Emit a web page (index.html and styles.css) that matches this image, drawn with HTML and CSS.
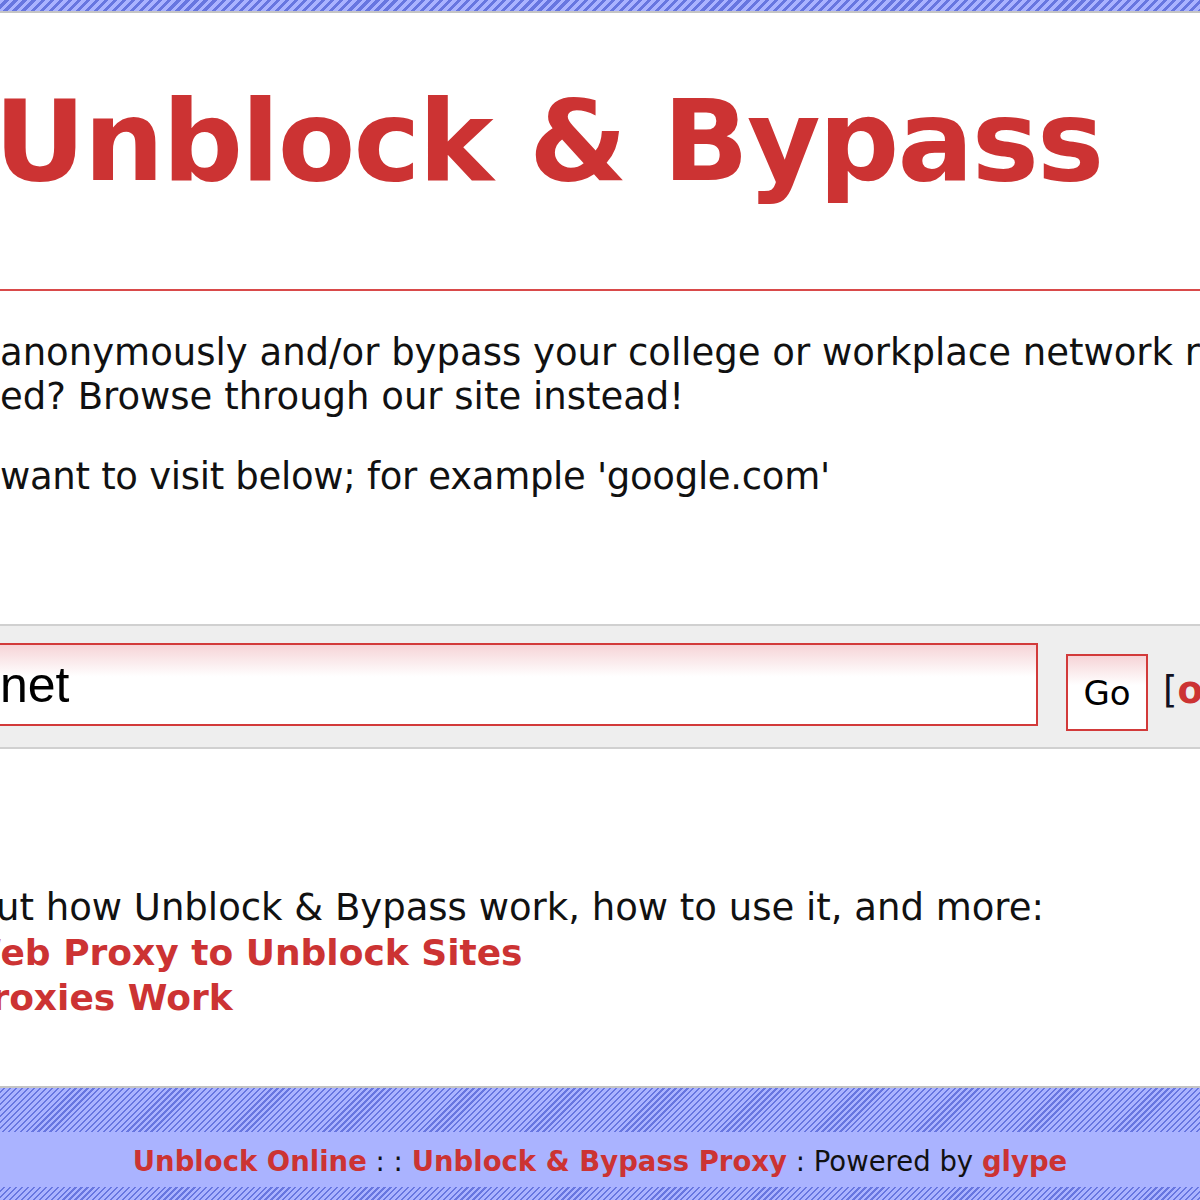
FILE: index.html
```html
<!DOCTYPE html>
<html lang="en">
  <head>
    <title>Unblock &amp; Bypass</title>
    <link rel="stylesheet" href="styles.css">
  </head>
  <body>
    <div class="topbar"></div>
    <main class="page">
      <header class="header">
        <h1 class="title">Unblock &amp; Bypass</h1>
      </header>
      <hr class="rule">
      <div class="intro">
        <p>
          <span class="line">anonymously and/or bypass your college or workplace network restrictions?</span>
          <span class="line">ed? Browse through our site instead!</span>
        </p>
        <p>
          <span class="line tight">want to visit below; for example 'google.com'</span>
        </p>
      </div>
      <form class="urlbar" onsubmit="return false">
        <input class="url" type="text" value="net">
        <button class="go" type="submit">Go</button>
        <span class="opts">[<a href="#">options</a>]</span>
      </form>
      <div class="more">
        <span class="line first">ut how Unblock &amp; Bypass work, how to use it, and more:</span>
        <a class="line link cut-w" href="#">Web Proxy to Unblock Sites</a>
        <a class="line link cut-p" href="#">Proxies Work</a>
      </div>
    </main>
    <footer class="footer">
      <div class="stripes"></div>
      <div class="credits">
        <a href="#">Unblock Online</a> : : <a href="#">Unblock &amp; Bypass Proxy</a> : Powered by <a href="#">glype</a>
      </div>
      <div class="stripes low"></div>
    </footer>
  </body>
</html>
```

FILE: styles.css
```css
html, body {
  margin: 0;
  padding: 0;
  width: 1200px;
  height: 1200px;
  overflow: hidden;
  background: #fff;
}

body {
  font-family: "DejaVu Sans", Verdana, sans-serif;
  color: #111;
}

a {
  color: #cc3333;
  font-weight: bold;
  text-decoration: none;
}

.topbar {
  height: 11px;
  background: repeating-linear-gradient(135deg, #aab3ff 0, #aab3ff 3.4px, #6776e0 3.4px, #6776e0 6.4px);
  border-bottom: 2px solid #c4c4c4;
}

.page {
  overflow: hidden;
}

.header {
  padding-top: 72px;
}

.title {
  margin: 0 0 0 -6px;
  font-size: 113px;
  line-height: 1;
  letter-spacing: -2px;
  font-weight: bold;
  color: #cc3333;
  white-space: nowrap;
}

.rule {
  margin: 91px 0 0;
  border: 0;
  height: 2px;
  background: #d94a4a;
}

.intro {
  padding-top: 4px;
  font-size: 37px;
  line-height: 44px;
}

.intro p {
  margin: 36px 0;
}

.line {
  display: block;
  white-space: nowrap;
}

.tight {
  letter-spacing: -0.3px;
}

.urlbar {
  display: flex;
  align-items: center;
  margin-top: 125px;
  height: 121px;
  background: #eeeeee;
  border-top: 2px solid #d0d0d0;
  border-bottom: 2px solid #d0d0d0;
}

.url {
  flex-shrink: 0;
  box-sizing: border-box;
  width: 1060px;
  height: 83px;
  margin: 0 0 4px -22px;
  padding: 0 0 0 20px;
  border: 2px solid #d23a3a;
  background: linear-gradient(#f6d4d7 0, #fff 40%);
  font-family: "Liberation Sans", Arial, sans-serif;
  font-size: 50px;
  color: #000;
}

.go {
  flex-shrink: 0;
  box-sizing: border-box;
  width: 82px;
  height: 77px;
  margin: 12px 0 0 28px;
  padding: 0;
  border: 2px solid #d23a3a;
  background: linear-gradient(#f6d4d7 0, #fff 40%);
  font-family: "DejaVu Sans", Verdana, sans-serif;
  font-size: 34px;
  color: #000;
}

.opts {
  flex-shrink: 0;
  margin: 8px 0 0 15px;
  font-size: 37px;
  white-space: nowrap;
  color: #112;
}

.more {
  padding: 136px 0 66px;
  font-size: 37px;
  line-height: 45px;
}

.more .link {
  font-size: 36px;
}

.first {
  margin-left: -4px;
}

.cut-w {
  margin-left: -38px;
}

.cut-p {
  margin-left: -35px;
}

.footer {
  border-top: 2px solid #c4c4c4;
  background: #aab3ff;
}

.stripes {
  height: 44px;
  background: repeating-linear-gradient(135deg, #aab3ff 0, #aab3ff 2.6px, #6776e0 2.6px, #6776e0 4.2px);
}

.stripes.low {
  height: 40px;
}

.credits {
  height: 55px;
  line-height: 58px;
  text-align: center;
  font-size: 27.5px;
  color: #111;
  white-space: nowrap;
}
```
